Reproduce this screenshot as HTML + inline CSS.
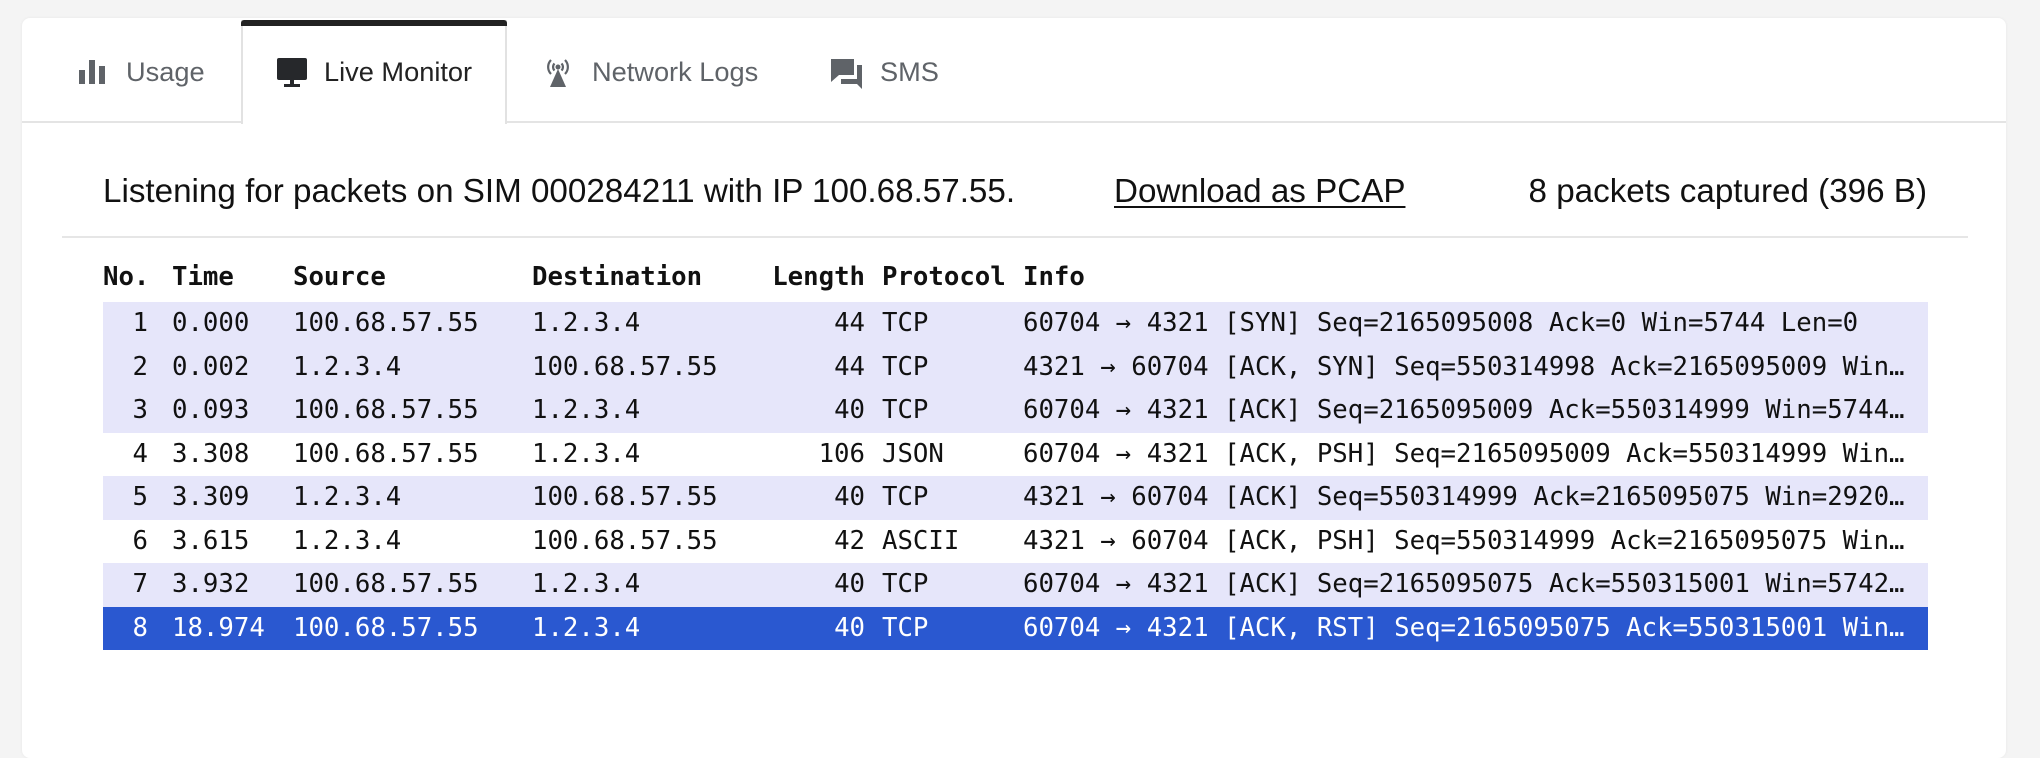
<!DOCTYPE html>
<html><head><meta charset="utf-8"><style>
*{margin:0;padding:0;box-sizing:border-box}
body{width:2040px;height:728px;background:#f4f4f4;position:relative;overflow:hidden;font-family:"Liberation Sans",Arial,sans-serif}
.card{position:absolute;left:22px;top:18px;width:1984px;height:740px;background:#fff;border-radius:8px;box-shadow:0 0 3px rgba(0,0,0,.06)}
.tabline{position:absolute;left:22px;top:121px;width:1984px;height:2px;background:#e4e4e4}
.active{position:absolute;left:241px;top:20px;width:266px;height:104px;background:#fff;border-left:2px solid #e2e2e2;border-right:2px solid #e2e2e2}
.activebar{position:absolute;left:241px;top:20px;width:266px;height:6px;background:#222;border-radius:3px 3px 0 0}
.tab{position:absolute;top:55px;font-size:27.2px;color:#5f6368;line-height:34px;white-space:nowrap}
.tab svg{position:absolute}
.info{position:absolute;top:173px;font-size:33.2px;line-height:38px;color:#111;white-space:nowrap}
.sep{position:absolute;left:62px;top:236px;width:1906px;height:2px;background:#e6e6e6}
.mono{font-family:"DejaVu Sans Mono","Liberation Mono",monospace;font-size:25.7px}
.row{position:absolute;left:103px;width:1825px;height:43.6px;line-height:43.6px;white-space:nowrap;color:#111}
.row span{position:absolute;top:0}
.hl{background:#e6e6fa}
.sel{background:#2a58d0;color:#fff}
.hdr{font-weight:bold}
.c1{right:1780px;text-align:right}
.c2{left:69px}.c3{left:190px}.c4{left:429px}
.c5{right:1063px;text-align:right}
.c6{left:779px}
.c7{left:920px}
</style></head><body>
<div class="card"></div>
<div class="tabline"></div>
<div class="active"></div>
<div class="activebar"></div>

<div class="tab" style="left:78px"><svg style="left:0;top:3px" width="30" height="28" viewBox="0 0 30 28"><rect x="1" y="12" width="6" height="14" fill="#5f6368"/><rect x="11" y="2" width="6" height="24" fill="#5f6368"/><rect x="21" y="8" width="6" height="18" fill="#5f6368"/></svg><span style="position:absolute;left:48px">Usage</span></div>

<div class="tab" style="left:276px;color:#222"><svg style="left:0;top:3px" width="32" height="32" viewBox="0 0 32 32"><rect x="1" y="0" width="30" height="22" rx="2" fill="#26282b"/><rect x="14" y="22" width="4" height="5" fill="#26282b"/><rect x="8" y="26" width="16" height="3" fill="#26282b"/></svg><span style="position:absolute;left:48px">Live Monitor</span></div>

<div class="tab" style="left:542px"><svg style="left:0;top:1px" width="32" height="34" viewBox="0 0 32 34"><g fill="none" stroke="#5f6368" stroke-width="2.2"><path d="M9 4 A10 10 0 0 0 9 18"/><path d="M23 4 A10 10 0 0 1 23 18"/><path d="M12.5 7.5 A5 5 0 0 0 12.5 14.5"/><path d="M19.5 7.5 A5 5 0 0 1 19.5 14.5"/></g><circle cx="16" cy="11" r="2.5" fill="#5f6368"/><path d="M16 13 L24 31 L8 31 Z" fill="#5f6368"/></svg><span style="position:absolute;left:50px">Network Logs</span></div>

<div class="tab" style="left:830px"><svg style="left:0;top:2px" width="36" height="34" viewBox="0 0 36 34"><path d="M1 2 H24 V18 H9 L1 25 Z" fill="#5f6368"/><path d="M27 8 H32 V32 L27 27 H11 V22 H27 Z" fill="#5f6368"/></svg><span style="position:absolute;left:50px">SMS</span></div>

<div class="info" style="left:103px">Listening for packets on SIM 000284211 with IP 100.68.57.55.</div>
<div class="info" style="left:1114px;text-decoration:underline;text-underline-offset:4px;text-decoration-thickness:2px">Download as PCAP</div>
<div class="info" style="right:113px">8 packets captured (396 B)</div>
<div class="sep"></div>

<div class="row mono hdr" style="top:256px"><span style="left:0">No.</span><span class="c2">Time</span><span class="c3">Source</span><span class="c4">Destination</span><span class="c5">Length</span><span class="c6">Protocol</span><span class="c7">Info</span></div>

<div class="row mono hl" style="top:302px"><span class="c1">1</span><span class="c2">0.000</span><span class="c3">100.68.57.55</span><span class="c4">1.2.3.4</span><span class="c5">44</span><span class="c6">TCP</span><span class="c7">60704 → 4321 [SYN] Seq=2165095008 Ack=0 Win=5744 Len=0</span></div>
<div class="row mono hl" style="top:345.5px"><span class="c1">2</span><span class="c2">0.002</span><span class="c3">1.2.3.4</span><span class="c4">100.68.57.55</span><span class="c5">44</span><span class="c6">TCP</span><span class="c7">4321 → 60704 [ACK, SYN] Seq=550314998 Ack=2165095009 Win…</span></div>
<div class="row mono hl" style="top:389px"><span class="c1">3</span><span class="c2">0.093</span><span class="c3">100.68.57.55</span><span class="c4">1.2.3.4</span><span class="c5">40</span><span class="c6">TCP</span><span class="c7">60704 → 4321 [ACK] Seq=2165095009 Ack=550314999 Win=5744…</span></div>
<div class="row mono" style="top:432.5px"><span class="c1">4</span><span class="c2">3.308</span><span class="c3">100.68.57.55</span><span class="c4">1.2.3.4</span><span class="c5">106</span><span class="c6">JSON</span><span class="c7">60704 → 4321 [ACK, PSH] Seq=2165095009 Ack=550314999 Win…</span></div>
<div class="row mono hl" style="top:476px"><span class="c1">5</span><span class="c2">3.309</span><span class="c3">1.2.3.4</span><span class="c4">100.68.57.55</span><span class="c5">40</span><span class="c6">TCP</span><span class="c7">4321 → 60704 [ACK] Seq=550314999 Ack=2165095075 Win=2920…</span></div>
<div class="row mono" style="top:519.5px"><span class="c1">6</span><span class="c2">3.615</span><span class="c3">1.2.3.4</span><span class="c4">100.68.57.55</span><span class="c5">42</span><span class="c6">ASCII</span><span class="c7">4321 → 60704 [ACK, PSH] Seq=550314999 Ack=2165095075 Win…</span></div>
<div class="row mono hl" style="top:563px"><span class="c1">7</span><span class="c2">3.932</span><span class="c3">100.68.57.55</span><span class="c4">1.2.3.4</span><span class="c5">40</span><span class="c6">TCP</span><span class="c7">60704 → 4321 [ACK] Seq=2165095075 Ack=550315001 Win=5742…</span></div>
<div class="row mono sel" style="top:606.5px"><span class="c1">8</span><span class="c2">18.974</span><span class="c3">100.68.57.55</span><span class="c4">1.2.3.4</span><span class="c5">40</span><span class="c6">TCP</span><span class="c7">60704 → 4321 [ACK, RST] Seq=2165095075 Ack=550315001 Win…</span></div>
</body></html>
